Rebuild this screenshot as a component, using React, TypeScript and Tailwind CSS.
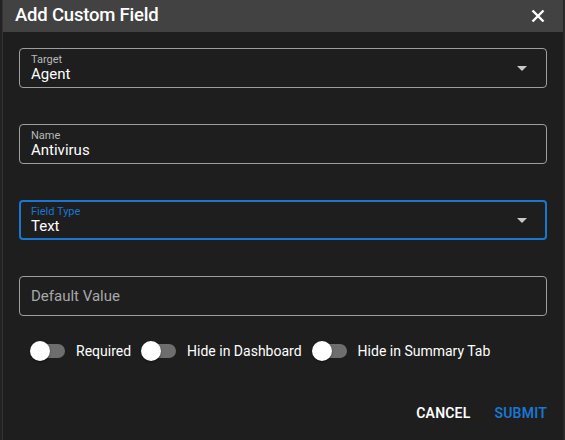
import React from "react";

function Arrow() {
  return (
    <svg width="10" height="5" viewBox="0 0 10 5" className="shrink-0">
      <path d="M0 0 L10 0 L5 5 Z" fill="#c8c8c8" />
    </svg>
  );
}

function Toggle() {
  return (
    <div className="relative w-[35px] h-[20px] flex items-center shrink-0">
      <div className="absolute left-[3px] right-0 h-[14px] rounded-full bg-[#6e6e6e]" />
      <div className="absolute left-0 w-[20px] h-[20px] rounded-full bg-white shadow-[0_1px_2px_rgba(0,0,0,0.5)]" />
    </div>
  );
}

export default function App() {
  return (
    <div
      className="w-[565px] h-[440px] flex bg-[#1b1b1b] overflow-hidden"
      style={{ fontFamily: "Roboto, 'Liberation Sans', sans-serif" }}
    >
      <div className="w-[3px] h-full bg-[#222] border-r border-[#333]" />
      <div className="w-[560px] h-full flex flex-col bg-[#1e1e1e]">
        <div className="h-[32px] bg-[#424242] flex items-center justify-between pl-[12px] pr-[18px]">
          <span className="text-white text-[18.5px] font-medium tracking-[-0.2px]">Add Custom Field</span>
          <svg width="14" height="14" viewBox="0 0 14 14">
            <path d="M1.5 1.5 L12.5 12.5 M12.5 1.5 L1.5 12.5" stroke="#fff" strokeWidth="2.4" />
          </svg>
        </div>
        <div className="flex flex-col px-[16px] pt-[16px]">
          <div className="h-[40px] border border-[#9e9e9e] rounded-[4px] flex items-center pl-[11px] pr-[19px]">
            <div className="flex-1 flex flex-col leading-none">
              <span className="text-[11px] text-[#b8b8b8] mb-[2px]">Target</span>
              <span className="text-[15px] text-white">Agent</span>
            </div>
            <Arrow />
          </div>
          <div className="h-[40px] mt-[36px] border border-[#9e9e9e] rounded-[4px] flex items-center pl-[11px] pr-[19px]">
            <div className="flex-1 flex flex-col leading-none">
              <span className="text-[11px] text-[#b8b8b8] mb-[2px]">Name</span>
              <span className="text-[15px] text-white">Antivirus</span>
            </div>
          </div>
          <div className="h-[40px] mt-[36px] border-2 border-[#1976d2] rounded-[4px] flex items-center pl-[10px] pr-[18px]">
            <div className="flex-1 flex flex-col leading-none">
              <span className="text-[11px] text-[#1976d2] mb-[2px]">Field Type</span>
              <span className="text-[15px] text-white">Text</span>
            </div>
            <Arrow />
          </div>
          <div className="h-[40px] mt-[36px] border border-[#9e9e9e] rounded-[4px] flex items-center pl-[11px]">
            <span className="text-[15px] text-[#a8a8a8]">Default Value</span>
          </div>
          <div className="flex items-center mt-[25px] pl-[11px] h-[20px]">
            <Toggle />
            <span className="ml-[11px] text-[14px] text-white">Required</span>
            <div className="ml-[10px]"><Toggle /></div>
            <span className="ml-[11px] text-[14px] text-white">Hide in Dashboard</span>
            <div className="ml-[10px]"><Toggle /></div>
            <span className="ml-[11px] text-[14px] text-white">Hide in Summary Tab</span>
          </div>
          <div className="flex justify-end items-center mt-[42px] gap-[24px]">
            <span className="text-[14px] font-semibold text-white tracking-[0.2px]">CANCEL</span>
            <span className="text-[14px] font-semibold text-[#1976d2] tracking-[0.2px]">SUBMIT</span>
          </div>
        </div>
      </div>
      <div className="w-[2px] h-full bg-[#2a2a2a]" />
    </div>
  );
}
